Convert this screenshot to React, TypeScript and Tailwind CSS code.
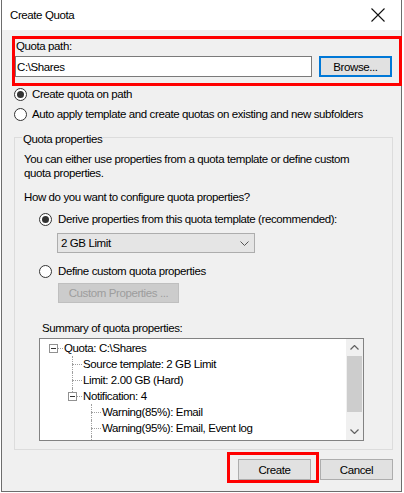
import React from "react";

const font = { fontFamily: '"Liberation Sans", Arial, sans-serif' };

function Radio({ checked }: { checked?: boolean }) {
  return (
    <span className="flex h-[13px] w-[13px] shrink-0 items-center justify-center rounded-full border border-[#333333] bg-white">
      {checked ? <span className="h-[7px] w-[7px] rounded-full bg-[#333333]" /> : null}
    </span>
  );
}

type Cell = { kind: "none" | "pass" | "mid" | "last" | "root"; box?: boolean };

function ConnCell({ kind, box }: Cell) {
  return (
    <div className="relative h-[16px] w-[19px] shrink-0">
      {kind === "pass" || kind === "mid" ? (
        <div className="absolute left-[9px] top-0 h-[16px] w-0 border-l border-dotted border-[#a0a0a0]" />
      ) : null}
      {kind === "last" ? (
        <div className="absolute left-[9px] top-0 h-[8px] w-0 border-l border-dotted border-[#a0a0a0]" />
      ) : null}
      {kind === "mid" || kind === "last" || kind === "root" ? (
        <div className="absolute left-[9px] right-0 top-[8px] h-0 border-t border-dotted border-[#a0a0a0]" />
      ) : null}
      {box ? (
        <div className="absolute left-[5px] top-[4px] flex h-[9px] w-[9px] items-center justify-center border border-[#919191] bg-white">
          <div className="h-px w-[5px] bg-[#333333]" />
        </div>
      ) : null}
    </div>
  );
}

function TreeRow({ cells, text }: { cells: Cell[]; text: string }) {
  return (
    <div className="flex h-[16px] items-center whitespace-nowrap">
      {cells.map((c, i) => (
        <ConnCell key={i} {...c} />
      ))}
      <span className="ml-[1px] leading-[16px]">{text}</span>
    </div>
  );
}

export default function App() {
  return (
    <div
      className="relative h-[493px] w-[404px] overflow-hidden bg-white text-[11.5px] tracking-[-0.4px] text-black"
      style={font}
    >
      <div className="ml-[1px] flex h-[492px] w-[401px] flex-col border-x border-b border-[#6d6d6d] bg-[#f0f0f0]">
        {/* Title bar */}
        <div className="flex h-[30px] shrink-0 items-center justify-between bg-white pl-[8px]">
          <span className="leading-[16px]">Create Quota</span>
          <div className="flex h-[30px] w-[46px] items-center justify-center">
            <svg width="14" height="14" viewBox="0 0 14 14">
              <path d="M0.5 0.5 L13.5 13.5 M13.5 0.5 L0.5 13.5" stroke="#111" strokeWidth="1.1" fill="none" />
            </svg>
          </div>
        </div>

        {/* Body */}
        <div className="flex flex-1 flex-col">
          <div className="mt-[8px] pl-[14px] leading-[16px]">Quota path:</div>
          <div className="mt-[2px] flex pl-[13px]">
            <div className="flex h-[21px] w-[297px] items-center border border-[#7a7a7a] bg-white pl-[1px] leading-[16px]">
              C:\Shares
            </div>
            <div className="ml-[7px] flex h-[21px] w-[73px] items-center justify-center border-2 border-[#0078d7] bg-[#e1e1e1] leading-[16px]">
              Browse...
            </div>
          </div>

          <div className="mt-[9px] flex h-[16px] items-center pl-[12px]">
            <Radio checked />
            <span className="ml-[5px] leading-[16px]">Create quota on path</span>
          </div>
          <div className="mt-[4px] flex h-[16px] items-center pl-[12px]">
            <Radio />
            <span className="ml-[5px] leading-[16px] whitespace-nowrap">
              Auto apply template and create quotas on existing and new subfolders
            </span>
          </div>

          {/* Group box */}
          <div className="ml-[12px] mr-[8px] mt-[15px] flex flex-col border border-[#dcdcdc] pb-[8px]">
            <div className="-mt-[7px] ml-[7px] w-fit bg-[#f0f0f0] px-[1px] leading-[16px]">Quota properties</div>
            <div className="mt-[5px] pl-[9px] leading-[14px]">
              You can either use properties from a quota template or define custom
              <br />
              quota properties.
            </div>
            <div className="mt-[9px] pl-[9px] leading-[16px]">How do you want to configure quota properties?</div>

            <div className="mt-[6px] flex h-[16px] items-center pl-[24px]">
              <Radio checked />
              <span className="ml-[6px] leading-[16px] whitespace-nowrap">
                Derive properties from this quota template (recommended):
              </span>
            </div>

            <div className="ml-[42px] mt-[6px] flex h-[20px] w-[198px] items-center justify-between border border-[#adadad] bg-[#e5e5e5] pl-[3px] pr-[5px]">
              <span className="leading-[16px]">2 GB Limit</span>
              <svg width="9" height="5" viewBox="0 0 9 5">
                <path d="M0.5 0.5 L4.5 4.5 L8.5 0.5" stroke="#555" strokeWidth="1" fill="none" />
              </svg>
            </div>

            <div className="mt-[10px] flex h-[16px] items-center pl-[24px]">
              <Radio />
              <span className="ml-[6px] leading-[16px]">Define custom quota properties</span>
            </div>

            <div className="ml-[43px] mt-[4px] flex h-[20px] w-[121px] items-center justify-center border border-[#bfbfbf] bg-[#cccccc] text-[#9d9d9d] leading-[16px]">
              Custom Properties ...
            </div>

            <div className="ml-[27px] mt-[17px] leading-[16px]">Summary of quota properties:</div>

            <div className="ml-[24px] mt-[2px] flex h-[103px] w-[325px] overflow-hidden border border-[#828282] bg-white">
              <div className="flex-1 overflow-hidden pl-[4px] pt-[1px]">
                <TreeRow cells={[{ kind: "root", box: true }]} text="Quota: C:\Shares" />
                <TreeRow cells={[{ kind: "none" }, { kind: "mid" }]} text="Source template: 2 GB Limit" />
                <TreeRow cells={[{ kind: "none" }, { kind: "mid" }]} text="Limit: 2.00 GB (Hard)" />
                <TreeRow cells={[{ kind: "none" }, { kind: "last", box: true }]} text="Notification: 4" />
                <TreeRow cells={[{ kind: "none" }, { kind: "none" }, { kind: "mid" }]} text="Warning(85%): Email" />
                <TreeRow cells={[{ kind: "none" }, { kind: "none" }, { kind: "mid" }]} text="Warning(95%): Email, Event log" />
                <TreeRow cells={[{ kind: "none" }, { kind: "none" }, { kind: "mid" }]} text="" />
              </div>
              <div className="flex w-[17px] shrink-0 flex-col bg-[#f0f0f0]">
                <div className="flex h-[17px] items-center justify-center">
                  <svg width="9" height="5" viewBox="0 0 9 5">
                    <path d="M0.5 4.5 L4.5 0.5 L8.5 4.5" stroke="#606060" strokeWidth="1.2" fill="none" />
                  </svg>
                </div>
                <div className="mx-[1px] h-[56px] bg-[#cdcdcd]" />
                <div className="flex-1" />
                <div className="flex h-[17px] items-center justify-center">
                  <svg width="9" height="5" viewBox="0 0 9 5">
                    <path d="M0.5 0.5 L4.5 4.5 L8.5 0.5" stroke="#606060" strokeWidth="1.2" fill="none" />
                  </svg>
                </div>
              </div>
            </div>
          </div>

          {/* Buttons */}
          <div className="mt-[9px] flex justify-end gap-[9px] pr-[8px]">
            <div className="flex h-[21px] w-[73px] items-center justify-center border border-[#adadad] bg-[#e1e1e1] leading-[16px]">
              Create
            </div>
            <div className="flex h-[21px] w-[73px] items-center justify-center border border-[#adadad] bg-[#e1e1e1] leading-[16px]">
              Cancel
            </div>
          </div>
        </div>
      </div>

      {/* Red annotation rectangles */}
      <div className="pointer-events-none absolute left-[12px] top-[36px] h-[50px] w-[390px] border-[3px] border-[#ff0000]" />
      <div className="pointer-events-none absolute left-[227px] top-[452px] h-[31px] w-[92px] border-[3px] border-[#ff0000]" />
    </div>
  );
}
